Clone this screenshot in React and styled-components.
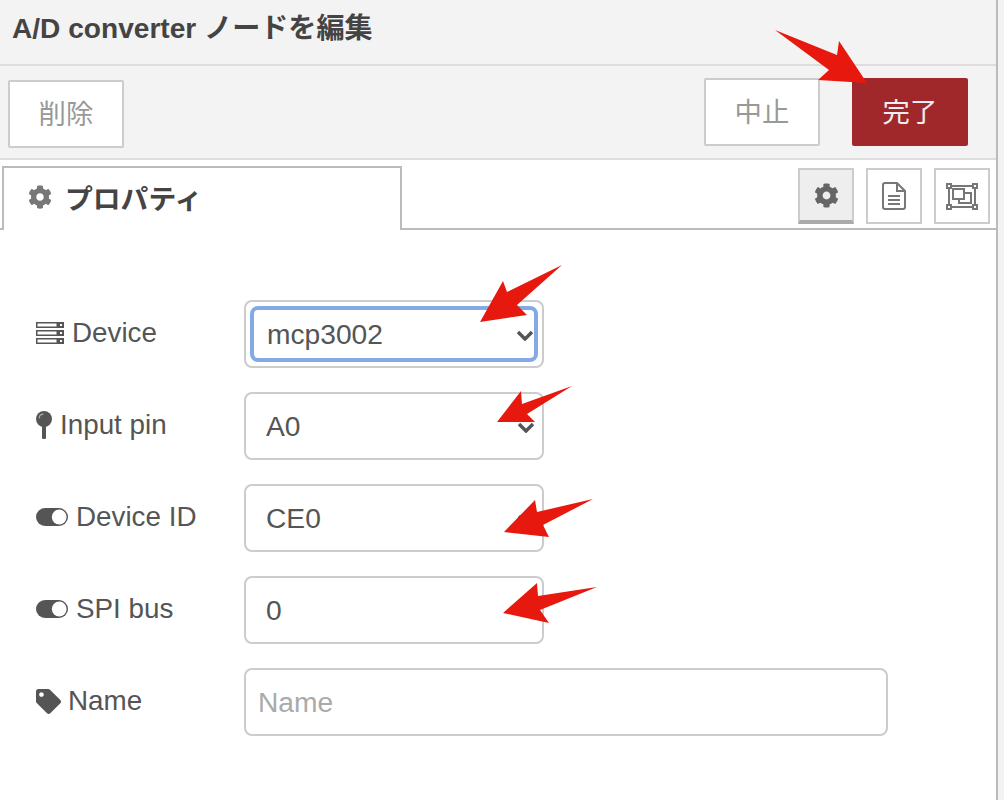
import React from "react";
import styled, { createGlobalStyle } from "styled-components";
import { FaCog, FaTag } from "react-icons/fa";

const GlobalStyle = createGlobalStyle`
  html, body {
    margin: 0;
    padding: 0;
    background: #f3f3f3;
  }
  body {
    font-family: "Liberation Sans", "Noto Sans CJK JP", sans-serif;
    color: #555;
  }
`;

const Page = styled.div`
  position: relative;
  width: 1004px;
  height: 800px;
  overflow: hidden;
  background: #f3f3f3;
`;

const Tray = styled.div`
  width: 998px;
  height: 800px;
  box-sizing: border-box;
  background: #fff;
  border-right: 2px solid #bbb;
`;

const Header = styled.div`
  height: 66px;
  box-sizing: border-box;
  padding: 11px 0 0 12px;
  background: #f3f3f3;
  border-bottom: 2px solid #ddd;
  font-size: 28.1px;
  line-height: 36px;
  font-weight: bold;
  color: #444;
`;

const Toolbar = styled.div`
  height: 94px;
  box-sizing: border-box;
  padding: 12px 28px 0 8px;
  background: #f3f3f3;
  border-bottom: 2px solid #ddd;
  display: flex;
`;

const Button = styled.div`
  width: 116px;
  height: 68px;
  box-sizing: border-box;
  margin-left: ${props => props.gap || 0}px;
  margin-top: ${props => props.drop || 0}px;
  padding-bottom: 4px;
  display: flex;
  align-items: center;
  justify-content: center;
  border: 2px solid ${props => (props.primary ? "#a0282b" : "#ccc")};
  border-radius: 2px;
  background: ${props => (props.primary ? "#a0282b" : "#fff")};
  color: ${props => (props.primary ? "#eee" : "#999")};
  font-size: 27.4px;
`;

const Spacer = styled.div`
  flex: 1;
`;

const TabBar = styled.div`
  height: 70px;
  box-sizing: border-box;
  padding: 6px 6px 0 2px;
  display: flex;
  justify-content: space-between;
  border-bottom: 2px solid #bbb;
`;

const Tab = styled.div`
  width: 400px;
  height: 64px;
  box-sizing: border-box;
  padding: 0 0 4px 24px;
  display: flex;
  align-items: center;
  gap: 13px;
  background: #fff;
  border: 2px solid #bbb;
  border-bottom: none;
  font-size: 27.8px;
  font-weight: bold;
  color: #444;
  svg {
    color: #777;
    font-size: 24px;
  }
`;

const TabIcons = styled.div`
  display: flex;
  gap: 12px;
  padding-top: 2px;
`;

const IconButton = styled.div`
  width: 56px;
  height: 56px;
  box-sizing: border-box;
  display: flex;
  align-items: center;
  justify-content: center;
  border: 2px solid #ccc;
  border-bottom: ${props => (props.selected ? "4px solid #aaa" : "2px solid #ccc")};
  background: ${props => (props.selected ? "#eee" : "#fff")};
  color: #666;
  font-size: 25px;
`;

const Form = styled.div`
  padding: 70px 0 0 36px;
  display: flex;
  flex-direction: column;
  gap: 24px;
`;

const Row = styled.div`
  display: flex;
  align-items: center;
  height: 68px;
`;

const Label = styled.div`
  width: 208px;
  height: 68px;
  box-sizing: border-box;
  padding-bottom: 2px;
  display: flex;
  align-items: center;
  gap: ${props => props.gap}px;
  font-size: 27.8px;
  color: #555;
  svg {
    flex: none;
  }
`;

const Field = styled.div`
  position: relative;
  width: ${props => (props.wide ? 644 : 300)}px;
  height: 68px;
  box-sizing: border-box;
  padding: ${props => (props.focused ? "4px" : "0")};
  border: ${props => (props.focused ? "2px solid #ccc" : "none")};
  border-radius: 8px;
`;

const Select = styled.select`
  width: 100%;
  height: 100%;
  box-sizing: border-box;
  padding: 0 40px 0 ${props => (props.focused ? 13 : 20)}px;
  appearance: none;
  outline: none;
  background: #fff;
  border: ${props => (props.focused ? "4px solid #82abe6" : "2px solid #ccc")};
  border-radius: 8px;
  font: 28.2px "Liberation Sans", "Noto Sans CJK JP", sans-serif;
  color: #555;
`;

const Input = styled.input`
  width: 100%;
  height: 100%;
  box-sizing: border-box;
  padding: 0 12px 0 ${props => props.inset}px;
  outline: none;
  background: #fff;
  border: 2px solid #ccc;
  border-radius: 8px;
  font: 28.2px "Liberation Sans", "Noto Sans CJK JP", sans-serif;
  color: #555;
  &::placeholder {
    color: #aaa;
    opacity: 1;
  }
`;

const Chevron = styled.svg`
  position: absolute;
  top: ${props => props.top}px;
  right: ${props => props.right}px;
  width: 18px;
  height: 11px;
  pointer-events: none;
`;

const ArrowLayer = styled.svg`
  position: absolute;
  top: 0;
  left: 0;
  width: 1004px;
  height: 800px;
  pointer-events: none;
`;

const ServerIcon = () => (
  <svg width="28" height="22" viewBox="0 0 28 22" fill="#555" aria-hidden="true">
    <path
      fillRule="evenodd"
      d="M0 0h28v6H0zM1.5 1.5v3h19v-3zM24 2v2h2V2zM0 8h28v6H0zM1.5 9.5v3h19v-3zM24 10v2h2v-2zM0 16h28v6H0zM1.5 17.5v3h19v-3zM24 18v2h2v-2z"
    />
  </svg>
);

const PinIcon = () => (
  <svg width="16" height="28" viewBox="0 0 16 28" fill="#555" aria-hidden="true">
    <circle cx="8" cy="8" r="8" />
    <rect x="6" y="15" width="4" height="13" rx="1" />
    <path d="M3.2 7.5C3.2 5 5 3.2 7.5 3.2" fill="none" stroke="#aaa" strokeWidth="1.2" />
  </svg>
);

const ToggleIcon = () => (
  <svg width="32" height="18" viewBox="0 0 32 18" aria-hidden="true">
    <rect width="32" height="18" rx="9" fill="#555" />
    <circle cx="23.2" cy="9" r="7.4" fill="#fff" />
  </svg>
);

const FileIcon = () => (
  <svg width="24" height="28" viewBox="0 0 24 28" fill="none" stroke="#777" strokeWidth="2" aria-hidden="true">
    <path d="M15 1H3a2 2 0 0 0-2 2v22a2 2 0 0 0 2 2h18a2 2 0 0 0 2-2V9z" />
    <path d="M15 1v8h8" />
    <path d="M6 14h12M6 18h12M6 22h12" />
  </svg>
);

const AppearanceIcon = () => (
  <svg width="32" height="27" viewBox="0 0 32 27" fill="none" stroke="#777" strokeWidth="2" aria-hidden="true">
    <rect x="1" y="1" width="4" height="4" />
    <rect x="27" y="1" width="4" height="4" />
    <rect x="1" y="22" width="4" height="4" />
    <rect x="27" y="22" width="4" height="4" />
    <path d="M5 3h22M5 24h22M3 5v17M29 5v17" />
    <rect x="7" y="6" width="11" height="10" />
    <path d="M18 10h7v10H13v-4" />
  </svg>
);

const ChevronIcon = ({ top, right }) => (
  <Chevron top={top} right={right} viewBox="0 0 18 11" aria-hidden="true">
    <path d="M2 2l7 7 7-7" fill="none" stroke="#555" strokeWidth="3.4" />
  </Chevron>
);

const ARROWS = [
  "775,30 837,55 839,41 867,83 818,80 829,70",
  "562,265 507,292 503,281 480,322 527,315 517,305",
  "572,386 522,404 521,391 497,422 535,422 527,414",
  "593,499 537,512 535,500 504,532 549,537 543,525",
  "597,587 538,596 537,583 503,613 549,623 540,610"
];

const App = () => (
  <Page>
    <GlobalStyle />
    <Tray>
      <Header>A/D converter ノードを編集</Header>
      <Toolbar>
        <Button drop={2}>削除</Button>
        <Spacer />
        <Button>中止</Button>
        <Button primary gap={32}>完了</Button>
      </Toolbar>
      <TabBar>
        <Tab>
          <FaCog />
          プロパティ
        </Tab>
        <TabIcons>
          <IconButton selected><FaCog /></IconButton>
          <IconButton><FileIcon /></IconButton>
          <IconButton><AppearanceIcon /></IconButton>
        </TabIcons>
      </TabBar>
      <Form>
        <Row>
          <Label gap={8}><ServerIcon />Device</Label>
          <Field focused>
            <Select focused defaultValue="mcp3002">
              <option>mcp3002</option>
            </Select>
            <ChevronIcon top={28} right={8} />
          </Field>
        </Row>
        <Row>
          <Label gap={8}><PinIcon />Input pin</Label>
          <Field>
            <Select defaultValue="A0">
              <option>A0</option>
            </Select>
            <ChevronIcon top={30} right={9} />
          </Field>
        </Row>
        <Row>
          <Label gap={8}><ToggleIcon />Device ID</Label>
          <Field>
            <Select defaultValue="CE0">
              <option>CE0</option>
            </Select>
            <ChevronIcon top={30} right={9} />
          </Field>
        </Row>
        <Row>
          <Label gap={8}><ToggleIcon />SPI bus</Label>
          <Field>
            <Input inset={20} defaultValue="0" />
          </Field>
        </Row>
        <Row>
          <Label gap={7}><FaTag size={25} />Name</Label>
          <Field wide>
            <Input inset={12} placeholder="Name" />
          </Field>
        </Row>
      </Form>
    </Tray>
    <ArrowLayer viewBox="0 0 1004 800" aria-hidden="true">
      {ARROWS.map(points => (
        <polygon key={points} points={points} fill="#e7190e" />
      ))}
    </ArrowLayer>
  </Page>
);

export default App;
